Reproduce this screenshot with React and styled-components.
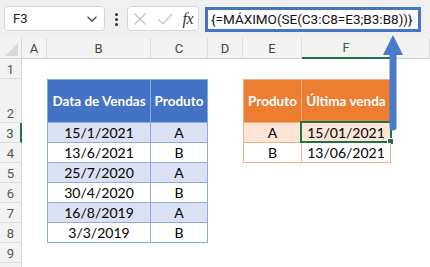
import React from 'react'
import styled, { createGlobalStyle } from 'styled-components'

const GlobalStyle = createGlobalStyle`
  html, body { margin: 0; padding: 0; background: #fff; }
  body { font-family: "Lato", "Liberation Sans", sans-serif; }
`

const BLUE = { head: '#4472C4', band: '#D9E1F2', line: '#8EA9DB' }
const ORANGE = { head: '#ED7D31', band: '#FCE4D6', line: '#F4B084' }

const COLS = ['A', 'B', 'C', 'D', 'E', 'F', 'G']

const sales = [
  ['15/1/2021', 'A'],
  ['13/6/2021', 'B'],
  ['25/7/2020', 'A'],
  ['30/4/2020', 'B'],
  ['16/8/2019', 'A'],
  ['3/3/2019', 'B'],
]

const latest = [
  ['A', '15/01/2021'],
  ['B', '13/06/2021'],
]

const Frame = styled.div`
  position: relative;
  width: 430px;
  height: 267px;
  overflow: hidden;
  background: #fff;
`

const Toolbar = styled.div`
  display: flex;
  align-items: center;
  height: 38px;
  padding: 0 9px 0 4px;
  box-sizing: border-box;
  background: #f0f0f0;
`

const NameBox = styled.div`
  display: flex;
  align-items: center;
  justify-content: space-between;
  width: 101px;
  height: 25px;
  margin-top: -1px;
  padding: 0 6px 0 8px;
  box-sizing: border-box;
  background: #fff;
  border: 1px solid #d6d6d6;
  border-radius: 4px;
  font-family: "Roboto", sans-serif;
  font-size: 13px;
  color: #222;
`

const Grip = styled.div`
  display: flex;
  flex-direction: column;
  align-items: center;
  gap: 2px;
  width: 22px;
  span {
    width: 3px;
    height: 3px;
    border-radius: 50%;
    background: #333;
  }
`

const FxBox = styled.div`
  display: flex;
  align-items: center;
  justify-content: space-between;
  width: 72px;
  height: 25px;
  margin-top: -1px;
  padding: 0 5px 0 5px;
  box-sizing: border-box;
  background: #fff;
  border: 1px solid #d6d6d6;
  border-radius: 4px;
`

const FxLabel = styled.span`
  font-family: "Liberation Serif", serif;
  font-style: italic;
  font-size: 16px;
  color: #333;
  letter-spacing: -0.5px;
`

const FormulaBox = styled.div`
  display: flex;
  align-items: center;
  width: 216px;
  height: 25px;
  margin-left: 6px;
  padding-left: 3px;
  box-sizing: border-box;
  border: 3px solid #4775c6;
  background: #fff;
  font-family: "Roboto", sans-serif;
  font-size: 13.5px;
  color: #111;
  white-space: nowrap;
  overflow: hidden;
`

const Sheet = styled.div`
  display: grid;
  grid-template-columns: 22px 25px 104px 57px 35px 59px 89px 1fr;
  grid-template-rows: 21px 20px 44px repeat(8, 20px);
`

const Corner = styled.div`
  display: flex;
  align-items: flex-end;
  justify-content: flex-end;
  padding: 0 3px 2px 0;
  background: #f3f3f3;
  border-right: 1px solid #d4d4d4;
  border-bottom: 1px solid #d4d4d4;
  box-sizing: border-box;
`

const ColHead = styled.div`
  display: flex;
  align-items: center;
  justify-content: center;
  background: #f3f3f3;
  border-right: 1px solid #dcdcdc;
  border-bottom: ${p => (p.$active ? '2px solid #217346' : '1px solid #d4d4d4')};
  box-sizing: border-box;
  font-family: "Roboto", sans-serif;
  font-size: 13px;
  color: ${p => (p.$active ? '#1e6b40' : '#444')};
`

const RowHead = styled.div`
  display: flex;
  align-items: flex-end;
  justify-content: center;
  padding-bottom: 1px;
  background: #f3f3f3;
  border-right: ${p => (p.$active ? '2px solid #217346' : '1px solid #d4d4d4')};
  border-bottom: 1px solid #dcdcdc;
  box-sizing: border-box;
  font-family: "Roboto", sans-serif;
  font-size: 13px;
  color: ${p => (p.$active ? '#1e6b40' : '#555')};
`

const Blank = styled.div`
  background: #fff;
`

const Cell = styled.div`
  position: relative;
  display: flex;
  align-items: center;
  justify-content: center;
  box-sizing: border-box;
  background: ${p => (p.$kind === 'head' ? p.$tone.head : p.$kind === 'band' ? p.$tone.band : '#fff')};
  color: ${p => (p.$kind === 'head' ? '#fff' : '#000')};
  font-weight: ${p => (p.$kind === 'head' ? 700 : 400)};
  font-size: ${p => (p.$kind === 'head' ? '13.5px' : '14px')};
  white-space: nowrap;
  border-right: 1px solid ${p => p.$tone.line};
  border-bottom: 1px solid ${p => p.$tone.line};
  border-left: ${p => (p.$first ? `1px solid ${p.$tone.line}` : 'none')};
  border-top: ${p => (p.$top ? `1px solid ${p.$tone.line}` : 'none')};
`

const Selection = styled.div`
  position: absolute;
  inset: -2px -2px -1px -2px;
  border: 2px solid #217346;
  pointer-events: none;
  &::after {
    content: '';
    position: absolute;
    right: -4px;
    bottom: -4px;
    width: 5px;
    height: 5px;
    background: #217346;
    border: 1px solid #fff;
  }
`

const Arrow = styled.svg`
  position: absolute;
  left: 382px;
  top: 34px;
`

const Chevron = () => (
  <svg width="12" height="8" viewBox="0 0 12 8">
    <path d="M1.5 1.8 L6 6 L10.5 1.8" fill="none" stroke="#444" strokeWidth="1.3" />
  </svg>
)

const Cross = () => (
  <svg width="14" height="14" viewBox="0 0 14 14">
    <path d="M1.5 1.5 L12.5 12.5 M12.5 1.5 L1.5 12.5" stroke="#c2c2c2" strokeWidth="1.2" />
  </svg>
)

const Check = () => (
  <svg width="16" height="14" viewBox="0 0 16 14">
    <path d="M1.5 7.5 L6 12 L15 2" fill="none" stroke="#c2c2c2" strokeWidth="1.2" />
  </svg>
)

function bodyCell(row, col) {
  const key = `${row}-${col}`
  // blue table: B2:C8
  if (row >= 2 && row <= 8 && (col === 'B' || col === 'C')) {
    const i = row - 3
    const head = row === 2
    const kind = head ? 'head' : i % 2 === 0 ? 'band' : 'plain'
    const text = head
      ? col === 'B' ? 'Data de Vendas' : 'Produto'
      : sales[i][col === 'B' ? 0 : 1]
    return (
      <Cell key={key} $tone={BLUE} $kind={kind} $first={col === 'B'} $top={head}>
        {text}
      </Cell>
    )
  }
  // orange table: E2:F4
  if (row >= 2 && row <= 4 && (col === 'E' || col === 'F')) {
    const i = row - 3
    const head = row === 2
    const kind = head ? 'head' : i === 0 ? 'band' : 'plain'
    const text = head
      ? col === 'E' ? 'Produto' : 'Última venda'
      : latest[i][col === 'E' ? 0 : 1]
    return (
      <Cell key={key} $tone={ORANGE} $kind={kind} $first={col === 'E'} $top={head}>
        {text}
        {row === 3 && col === 'F' && <Selection />}
      </Cell>
    )
  }
  return <Blank key={key} />
}

export default function App() {
  const rows = [1, 2, 3, 4, 5, 6, 7, 8, 9, 10]
  return (
    <Frame>
      <GlobalStyle />
      <Toolbar>
        <NameBox>
          <span>F3</span>
          <Chevron />
        </NameBox>
        <Grip>
          <span />
          <span />
          <span />
        </Grip>
        <FxBox>
          <Cross />
          <Check />
          <FxLabel>fx</FxLabel>
        </FxBox>
        <FormulaBox>{'{=MÁXIMO(SE(C3:C8=E3;B3:B8))}'}</FormulaBox>
      </Toolbar>

      <Sheet>
        <Corner>
          <svg width="13" height="13" viewBox="0 0 13 13">
            <polygon points="0,13 13,0 13,13" fill="#d9d9d9" />
          </svg>
        </Corner>
        {COLS.map(c => (
          <ColHead key={c} $active={c === 'F'}>
            {c === 'G' ? '' : c}
          </ColHead>
        ))}
        {rows.map(r => (
          <React.Fragment key={r}>
            <RowHead $active={r === 3}>{r < 10 ? r : ''}</RowHead>
            {COLS.map(c => bodyCell(r, c))}
          </React.Fragment>
        ))}
      </Sheet>

      <Arrow width="22" height="98" viewBox="0 0 22 98">
        <polygon points="1,21 11,1 21,21" fill="#4a7bcb" />
        <path d="M7.5 20 H14.5 V93 A3.5 3.5 0 0 1 7.5 93 Z" fill="#4a7bcb" />
      </Arrow>
    </Frame>
  )
}
